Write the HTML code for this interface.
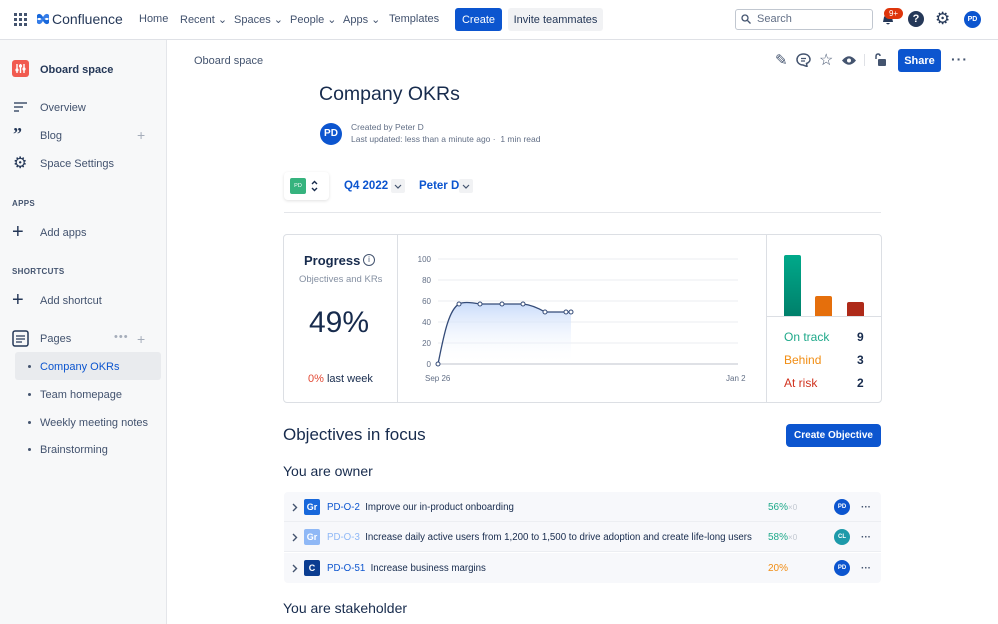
<!DOCTYPE html>
<html><head><meta charset="utf-8"><style>
*{box-sizing:border-box;margin:0;padding:0}
body{width:998px;height:624px;overflow:hidden;background:#fff;font-family:"Liberation Sans",sans-serif;color:#172b4d;position:relative;font-size:11px}
.a{position:absolute;white-space:nowrap}
.nav{color:#42526e;font-size:11px;top:13px}
.side{left:0;top:40px;width:167px;height:584px;background:#f7f8f9;border-right:1px solid #e4e6ea}
.si{left:40px;font-size:11px;color:#42526e}
.hd{left:12px;font-size:8px;font-weight:bold;color:#44546f;letter-spacing:.3px}
.av{border-radius:50%;background:#0c55cf;color:#fff;font-weight:bold;text-align:center}
.row{left:284px;width:597px;height:30px;background:#f7f8fb;border-bottom:1px solid #eceef2}
.bt{display:flex;align-items:center;justify-content:center}
.dot{left:28px;width:3px;height:3px;border-radius:50%;background:#44546f}
</style></head><body>
<div class="a" style="left:0;top:39px;width:998px;height:1px;background:#dfe1e6"></div>
<svg class="a" style="left:14px;top:13px" width="13" height="13"><g fill="#44546f"><rect x="0" y="0" width="3" height="3"/><rect x="5" y="0" width="3" height="3"/><rect x="10" y="0" width="3" height="3"/><rect x="0" y="5" width="3" height="3"/><rect x="5" y="5" width="3" height="3"/><rect x="10" y="5" width="3" height="3"/><rect x="0" y="10" width="3" height="3"/><rect x="5" y="10" width="3" height="3"/><rect x="10" y="10" width="3" height="3"/></g></svg>
<svg class="a" style="left:36px;top:12px" width="14" height="14"><path d="M1 3 Q4 0 7 5 Q10 10 13 7 L13 11 Q10 14 7 9 Q4 4 1 7Z" fill="#1868db"/><path d="M1 11 Q4 14 7 9 Q10 4 13 7 L13 3 Q10 0 7 5 Q4 10 1 7Z" fill="#357de8"/></svg>
<div class="a" style="left:52px;top:11px;font-size:14px;color:#253858">Confluence</div>
<div class="a nav" style="left:139px">Home</div>
<div class="a nav" style="left:180px">Recent ⌄</div>
<div class="a nav" style="left:234px">Spaces ⌄</div>
<div class="a nav" style="left:290px">People ⌄</div>
<div class="a nav" style="left:343px">Apps ⌄</div>
<div class="a nav" style="left:389px">Templates</div>
<div class="a bt" style="left:455px;top:8px;width:47px;height:23px;background:#0c55cf;border-radius:3px;color:#fff;font-size:11px">Create</div>
<div class="a bt" style="left:508px;top:8px;width:95px;height:23px;background:#f1f2f4;border-radius:3px;color:#253858;font-size:11px">Invite teammates</div>
<div class="a" style="left:735px;top:9px;width:138px;height:21px;border:1.5px solid #c1c7d0;border-radius:3px;color:#626f86;font-size:11px;padding-left:21px;line-height:18px">Search</div>
<svg class="a" style="left:741px;top:14px" width="10" height="10"><circle cx="4" cy="4" r="3" stroke="#44546f" stroke-width="1.3" fill="none"/><path d="M6.5 6.5L9.5 9.5" stroke="#44546f" stroke-width="1.3"/></svg>
<svg class="a" style="left:881px;top:12px" width="14" height="14"><path d="M2 10 L3 5 Q7 0 11 5 L12 10Z M5 11 Q7 14 9 11" fill="#253858"/></svg>
<div class="a" style="left:884px;top:8px;width:19px;height:11px;background:#de350b;border-radius:6px;color:#fff;font-size:8px;text-align:center;line-height:11px">9+</div>
<div class="a" style="left:908px;top:11px;width:16px;height:16px;border-radius:50%;background:#253858;color:#fff;font-weight:bold;font-size:11px;text-align:center;line-height:16px">?</div>
<div class="a" style="left:935px;top:9px;font-size:17px;color:#253858">⚙</div>
<div class="a av" style="left:964px;top:11px;width:17px;height:17px;font-size:7px;line-height:17px">PD</div>
<div class="a side"></div>
<svg class="a" style="left:12px;top:60px" width="17" height="17"><rect width="17" height="17" rx="3" fill="#f15b50"/><path d="M5 4v9M8.5 4v9M12 4v9" stroke="#fff" stroke-width="1.4"/><circle cx="5" cy="10" r="1.6" fill="#fff"/><circle cx="8.5" cy="6" r="1.6" fill="#fff"/><circle cx="12" cy="9" r="1.6" fill="#fff"/></svg>
<div class="a" style="left:40px;top:64px;font-size:11px;font-weight:bold;color:#253858">Oboard space</div>
<svg class="a" style="left:14px;top:102px" width="14" height="10"><path d="M0 1h13M0 5h9M0 9h5" stroke="#44546f" stroke-width="1.5"/></svg>
<div class="a si" style="top:102px">Overview</div>
<div class="a" style="left:13px;top:124px;font-size:18px;font-weight:bold;color:#253858;font-family:'Liberation Serif',serif">”</div>
<div class="a si" style="top:130px">Blog</div>
<div class="a" style="left:137px;top:127px;font-size:14px;color:#a5adba">+</div>
<div class="a" style="left:13px;top:153px;font-size:16px;color:#253858">⚙</div>
<div class="a si" style="top:158px">Space Settings</div>
<div class="a hd" style="top:199px">APPS</div>
<div class="a" style="left:12px;top:221px;font-size:20px;color:#253858">+</div>
<div class="a si" style="top:227px">Add apps</div>
<div class="a hd" style="top:267px">SHORTCUTS</div>
<div class="a" style="left:12px;top:289px;font-size:20px;color:#253858">+</div>
<div class="a si" style="top:295px">Add shortcut</div>
<svg class="a" style="left:12px;top:330px" width="18" height="17"><rect x="1" y="1" width="15" height="15" rx="2" stroke="#253858" stroke-width="1.5" fill="none"/><path d="M4 6h9M4 9h9M4 12h6" stroke="#253858" stroke-width="1.3"/></svg>
<div class="a si" style="top:333px">Pages</div>
<div class="a" style="left:114px;top:331px;font-size:11px;color:#a5adba;letter-spacing:1px">•••</div>
<div class="a" style="left:137px;top:331px;font-size:14px;color:#a5adba">+</div>
<div class="a" style="left:15px;top:352px;width:146px;height:28px;background:#e9ebee;border-radius:3px"></div>
<div class="a dot" style="top:365px"></div>
<div class="a si" style="top:361px;color:#0c55cf">Company OKRs</div>
<div class="a dot" style="top:393px"></div>
<div class="a si" style="top:389px">Team homepage</div>
<div class="a dot" style="top:421px"></div>
<div class="a si" style="top:417px">Weekly meeting notes</div>
<div class="a dot" style="top:448px"></div>
<div class="a si" style="top:444px">Brainstorming</div>
<div class="a" style="left:194px;top:55px;color:#44546f;font-size:11px">Oboard space</div>
<div class="a" style="left:775px;top:51px;font-size:15px;color:#44546f">✎</div>
<svg class="a" style="left:796px;top:53px" width="15" height="14"><path d="M7.5 1C3.5 1 1 3.5 1 6.5S3.5 12 7 12L11 13.5 10.5 10.5Q14 9 14 6.5C14 3.5 11.5 1 7.5 1Z" stroke="#44546f" stroke-width="1.5" fill="none"/><path d="M5 5.5h5M5 8h4" stroke="#44546f" stroke-width="1.2"/></svg>
<div class="a" style="left:819px;top:50px;font-size:16px;color:#44546f">☆</div>
<svg class="a" style="left:841px;top:55px" width="16" height="11"><path d="M1 5.5Q8 -3 15 5.5Q8 14 1 5.5Z" fill="#44546f"/><circle cx="8" cy="5.5" r="2" fill="#fff"/></svg>
<div class="a" style="left:864px;top:54px;width:1px;height:12px;background:#dfe1e6"></div>
<svg class="a" style="left:873px;top:53px" width="13" height="14"><path d="M3 6V3.5Q3 1 5 1Q7 1 7 3" stroke="#44546f" stroke-width="1.5" fill="none"/><rect x="5" y="6" width="8" height="7" rx="1" fill="#44546f"/></svg>
<div class="a bt" style="left:898px;top:49px;width:43px;height:23px;background:#0c55cf;border-radius:3px;color:#fff;font-size:11px;font-weight:bold">Share</div>
<div class="a" style="left:951px;top:51px;font-size:14px;color:#44546f;letter-spacing:1px;font-weight:bold">···</div>
<div class="a" style="left:319px;top:83px;font-size:19.5px;color:#172b4d">Company OKRs</div>
<div class="a av" style="left:320px;top:123px;width:22px;height:22px;font-size:10px;line-height:22px">PD</div>
<div class="a" style="left:351px;top:122px;font-size:8.5px;color:#626f86">Created by Peter D</div>
<div class="a" style="left:351px;top:134px;font-size:8.5px;color:#626f86">Last updated: less than a minute ago ·&nbsp; 1 min read</div>
<div class="a" style="left:284px;top:172px;width:45px;height:28px;border-radius:4px;box-shadow:0 1px 3px rgba(0,0,0,.12)"></div>
<div class="a" style="left:290px;top:178px;width:16px;height:16px;background:#36b37e;border-radius:2px;color:#fff;font-size:5.5px;text-align:center;line-height:16px">PD</div>
<svg class="a" style="left:311px;top:180px" width="7" height="12"><path d="M1 4L3.5 1.5 6 4M1 8L3.5 10.5 6 8" stroke="#172b4d" stroke-width="1.4" fill="none"/></svg>
<div class="a" style="left:344px;top:180px;font-size:11.5px;font-weight:bold;color:#0c55cf">Q4 2022</div>
<div class="a bt" style="left:391px;top:179px;width:14px;height:14px;background:#f1f2f4;border-radius:2px;color:#44546f"><svg width="8" height="5"><path d="M1 1L4 4 7 1" stroke="#44546f" stroke-width="1.2" fill="none"/></svg></div>
<div class="a" style="left:419px;top:180px;font-size:11.5px;font-weight:bold;color:#0c55cf">Peter D</div>
<div class="a bt" style="left:459px;top:179px;width:14px;height:14px;background:#f1f2f4;border-radius:2px"><svg width="8" height="5"><path d="M1 1L4 4 7 1" stroke="#44546f" stroke-width="1.2" fill="none"/></svg></div>
<div class="a" style="left:284px;top:212px;width:597px;height:1px;background:#e4e6ea"></div>
<div class="a" style="left:283px;top:234px;width:599px;height:169px;border:1px solid #dcdfe4;border-radius:4px"></div>
<div class="a" style="left:397px;top:235px;width:1px;height:167px;background:#dcdfe4"></div>
<div class="a" style="left:766px;top:235px;width:1px;height:167px;background:#dcdfe4"></div>
<div class="a" style="left:304px;top:253px;font-size:13px;font-weight:bold;color:#172b4d">Progress</div>
<div class="a" style="left:363px;top:254px;width:12px;height:12px;border:1.2px solid #44546f;border-radius:50%;font-size:8px;text-align:center;line-height:10px;color:#44546f">i</div>
<div class="a" style="left:299px;top:274px;font-size:9.5px;color:#8590a2">Objectives and KRs</div>
<div class="a" style="left:309px;top:306px;font-size:30px;color:#172b4d">49%</div>
<div class="a" style="left:308px;top:373px;font-size:11px;color:#172b4d"><span style="color:#e34935">0%</span> last week</div>
<svg class="a" style="left:398px;top:250px" width="368" height="140">
<defs><linearGradient id="g" x1="0" y1="0" x2="0" y2="1"><stop offset="0" stop-color="#c9dbfa"/><stop offset="1" stop-color="#fff" stop-opacity="0"/></linearGradient></defs>
<g stroke="#ebecf0" stroke-width="1"><path d="M40 9H340M40 30H340M40 51H340M40 72H340M40 93H340"/></g>
<path d="M40 114H340" stroke="#dfe1e6" stroke-width="2"/>
<g font-size="8" fill="#626f86" text-anchor="end" font-family="Liberation Sans"><text x="33" y="12">100</text><text x="33" y="33">80</text><text x="33" y="54">60</text><text x="33" y="75">40</text><text x="33" y="96">20</text><text x="33" y="117">0</text></g>
<g font-size="8" fill="#626f86" font-family="Liberation Sans"><text x="27" y="131">Sep 26</text><text x="328" y="131">Jan 2</text></g>
<path d="M40 114 C45 90 50 60 61 54 Q66 51 82 54 L104 54 L125 54 Q135 55 147 62 L168 62 L173 62 L173 114Z" fill="url(#g)"/>
<path d="M40 114 C45 90 50 60 61 54 Q66 51 82 54 L104 54 L125 54 Q135 55 147 62 L168 62 L173 62" stroke="#344b78" stroke-width="1.3" fill="none"/>
<g fill="#fff" stroke="#344b78" stroke-width="1"><circle cx="40" cy="114" r="2"/><circle cx="61" cy="54" r="2"/><circle cx="82" cy="54" r="2"/><circle cx="104" cy="54" r="2"/><circle cx="125" cy="54" r="2"/><circle cx="147" cy="62" r="2"/><circle cx="168" cy="62" r="2"/><circle cx="173" cy="62" r="2"/></g>
</svg>
<div class="a" style="left:784px;top:255px;width:17px;height:61px;background:linear-gradient(#00a98a,#00806b);border-radius:2px 2px 0 0"></div>
<div class="a" style="left:815px;top:296px;width:17px;height:20px;background:#e56f0c;border-radius:2px 2px 0 0"></div>
<div class="a" style="left:847px;top:302px;width:17px;height:14px;background:#ae2a19;border-radius:2px 2px 0 0"></div>
<div class="a" style="left:767px;top:316px;width:114px;height:1px;background:#dcdfe4"></div>
<div class="a" style="left:784px;top:330px;font-size:12px;color:#1fa98a">On track</div>
<div class="a" style="left:784px;top:353px;font-size:12px;color:#f18d13">Behind</div>
<div class="a" style="left:784px;top:376px;font-size:12px;color:#d1321e">At risk</div>
<div class="a" style="left:857px;top:330px;font-size:12px;font-weight:bold">9</div>
<div class="a" style="left:857px;top:353px;font-size:12px;font-weight:bold">3</div>
<div class="a" style="left:857px;top:376px;font-size:12px;font-weight:bold">2</div>
<div class="a" style="left:283px;top:425px;font-size:17px;color:#172b4d">Objectives in focus</div>
<div class="a bt" style="left:786px;top:424px;width:95px;height:23px;background:#0c55cf;border-radius:4px;color:#fff;font-size:10px;font-weight:bold">Create Objective</div>
<div class="a" style="left:283px;top:463px;font-size:14px;color:#172b4d">You are owner</div>
<div class="a row" style="top:492px;border-radius:4px 4px 0 0"></div>
<div class="a row" style="top:522px"></div>
<div class="a row" style="top:553px;border-radius:0 0 4px 4px;border-bottom:none"></div>
<svg class="a" style="left:292px;top:503px" width="6" height="9"><path d="M1 1L4.5 4.5 1 8" stroke="#44546f" stroke-width="1.4" fill="none"/></svg>
<svg class="a" style="left:292px;top:533px" width="6" height="9"><path d="M1 1L4.5 4.5 1 8" stroke="#44546f" stroke-width="1.4" fill="none"/></svg>
<svg class="a" style="left:292px;top:564px" width="6" height="9"><path d="M1 1L4.5 4.5 1 8" stroke="#44546f" stroke-width="1.4" fill="none"/></svg>
<div class="a" style="left:304px;top:499px;width:16px;height:16px;background:#1868db;border-radius:2px;color:#fff;font-size:9px;font-weight:bold;text-align:center;line-height:16px">Gr</div>
<div class="a" style="left:304px;top:529px;width:16px;height:16px;background:#8fb8f6;border-radius:2px;color:#fff;font-size:9px;font-weight:bold;text-align:center;line-height:16px">Gr</div>
<div class="a" style="left:304px;top:560px;width:16px;height:16px;background:#0b3d91;border-radius:2px;color:#fff;font-size:9px;font-weight:bold;text-align:center;line-height:16px">C</div>
<div class="a" style="left:327px;top:502px;font-size:9.7px;color:#0c55cf">PD-O-2 <span style="color:#172b4d">&nbsp;Improve our in-product onboarding</span></div>
<div class="a" style="left:327px;top:532px;font-size:9.7px;color:#8fb8f6">PD-O-3 <span style="color:#172b4d">&nbsp;Increase daily active users from 1,200 to 1,500 to drive adoption and create life-long users</span></div>
<div class="a" style="left:327px;top:563px;font-size:9.7px;color:#0c55cf">PD-O-51 <span style="color:#172b4d">&nbsp;Increase business margins</span></div>
<div class="a" style="left:768px;top:502px;font-size:10px;color:#1fa98a">56%<span style="color:#c1c7d0;font-size:8px">×0</span></div>
<div class="a" style="left:768px;top:532px;font-size:10px;color:#1fa98a">58%<span style="color:#c1c7d0;font-size:8px">×0</span></div>
<div class="a" style="left:768px;top:563px;font-size:10px;color:#f18d13">20%</div>
<div class="a av" style="left:834px;top:499px;width:16px;height:16px;font-size:6px;line-height:16px">PD</div>
<div class="a av" style="left:834px;top:529px;width:16px;height:16px;font-size:6px;line-height:16px;background:#1d9aaa">CL</div>
<div class="a av" style="left:834px;top:560px;width:16px;height:16px;font-size:6px;line-height:16px">PD</div>
<div class="a" style="left:861px;top:502px;font-size:10px;font-weight:bold;color:#44546f">···</div>
<div class="a" style="left:861px;top:532px;font-size:10px;font-weight:bold;color:#44546f">···</div>
<div class="a" style="left:861px;top:563px;font-size:10px;font-weight:bold;color:#44546f">···</div>
<div class="a" style="left:283px;top:600px;font-size:14px;color:#172b4d">You are stakeholder</div>
</body></html>
